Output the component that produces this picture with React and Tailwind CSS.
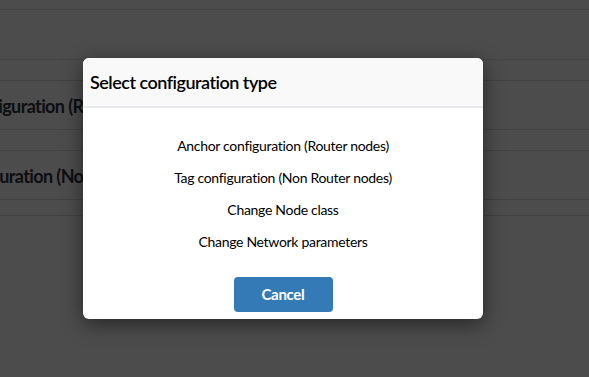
import React from "react";

const options = [
  "Anchor configuration (Router nodes)",
  "Tag configuration (Non Router nodes)",
  "Change Node class",
  "Change Network parameters",
];

export default function App() {
  return (
    <div
      className="relative w-[589px] h-[377px] overflow-hidden bg-white"
      style={{ fontFamily: "Lato, 'Noto Sans', sans-serif" }}
    >
      {/* page behind the modal */}
      <div className="h-[10px] border-b border-[#dddddd]"></div>
      <div className="h-[50px] border-b border-[#dddddd]"></div>
      <div className="h-[20px]"></div>
      <div className="h-[50px] border-y border-[#dddddd] flex items-center pt-[3px]">
        <span className="ml-[-93px] text-[18px] font-bold text-[#2c3440] whitespace-nowrap tracking-[-0.6px]">
          Anchor configuration (Router nodes)
        </span>
      </div>
      <div className="h-[20px]"></div>
      <div className="h-[50px] border-y border-[#dddddd] flex items-center pt-[2px]">
        <span className="ml-[-76px] text-[18px] font-bold text-[#2c3440] whitespace-nowrap tracking-[-0.6px]">
          Tag configuration (Non Router nodes)
        </span>
      </div>
      <div className="h-[16px] border-b border-[#dddddd]"></div>

      {/* backdrop */}
      <div className="absolute inset-0 bg-black/70"></div>

      {/* modal */}
      <div className="absolute left-[83px] top-[58px] w-[400px] h-[261px] bg-white rounded-[6px] overflow-hidden shadow-[0_5px_20px_rgba(0,0,0,0.5)] flex flex-col">
        <div className="h-[50px] shrink-0 bg-[#f9f9f9] border-b-2 border-[#e6e8eb] flex items-center px-[7px]">
          <h4 className="text-[18px] font-semibold text-black tracking-[-0.5px]">
            Select configuration type
          </h4>
        </div>
        <div className="flex flex-col items-center pt-[21px]">
          {options.map((o) => (
            <div
              key={o}
              className="h-[32px] flex items-center text-[14px] text-black tracking-[-0.3px]"
            >
              {o}
            </div>
          ))}
          <button className="mt-[20px] w-[99px] h-[35px] rounded-[4px] bg-[#337ab7] text-white text-[15px] font-bold tracking-[-0.3px]">
            Cancel
          </button>
        </div>
      </div>
    </div>
  );
}
